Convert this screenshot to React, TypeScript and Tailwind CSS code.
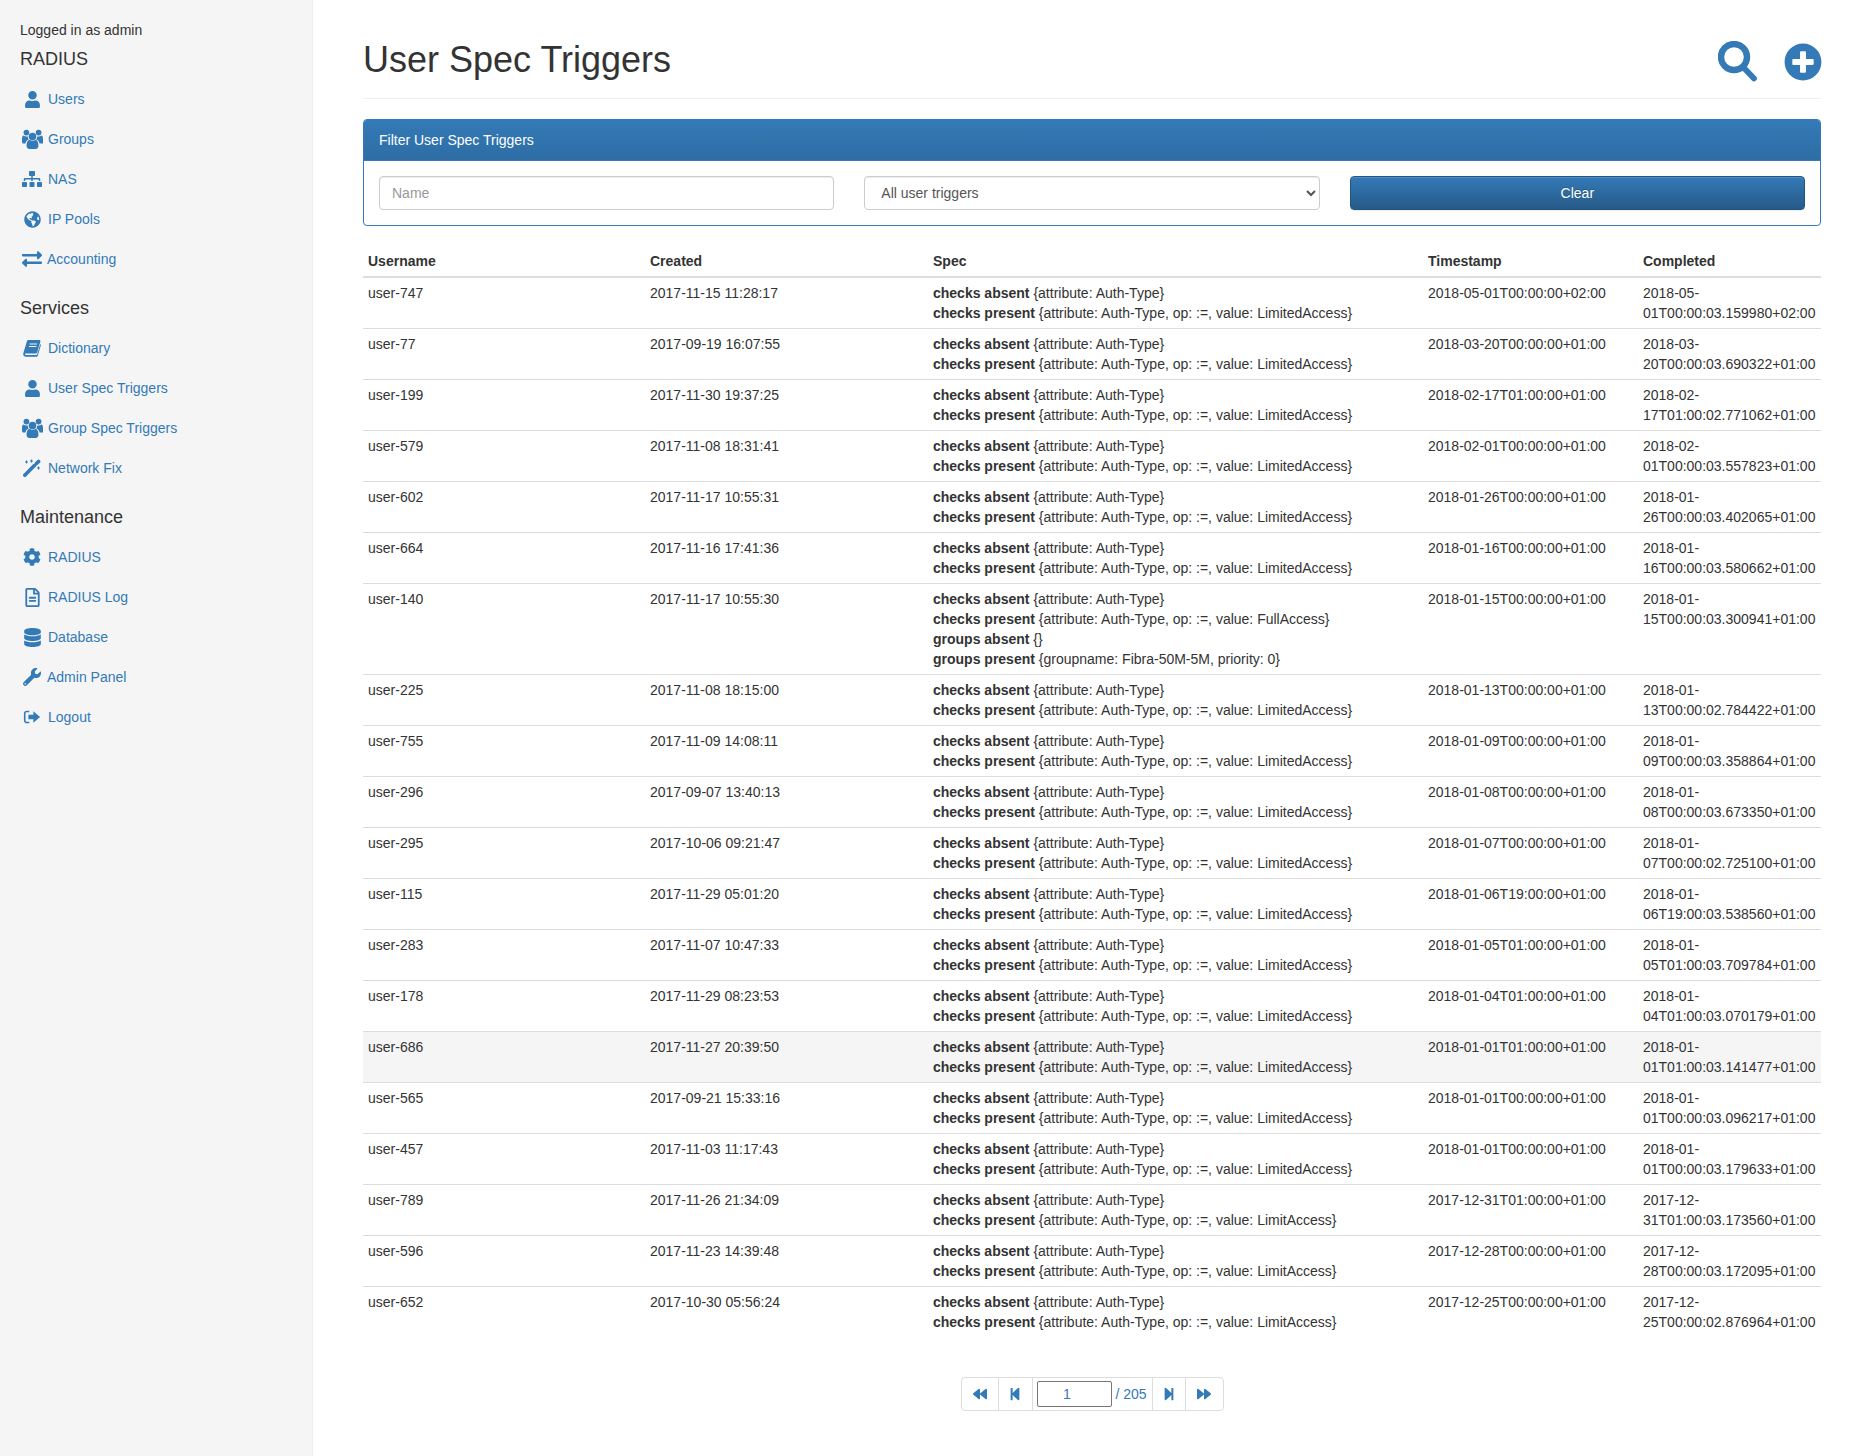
import React from "react";
import { FaUser, FaSitemap, FaGlobeAmericas, FaExchangeAlt, FaCog, FaRegFileAlt, FaDatabase, FaWrench, FaPlusCircle, FaBackward, FaStepBackward, FaStepForward, FaForward } from "react-icons/fa";

const SignOut = ({ size = 18 }: { size?: number }) => (
  <svg width={size} height={size} viewBox="0 0 20 20" fill="currentColor">
    <path d="M7 3H4.2C2.4 3 1 4.4 1 6.2v7.6C1 15.6 2.4 17 4.2 17H7v-1.8H4.2c-.8 0-1.4-.6-1.4-1.4V6.2c0-.8.6-1.4 1.4-1.4H7z" />
    <path d="M11.5 3.6 19 10l-7.5 6.4V12.6H6V7.4h5.5z" />
  </svg>
);

const UsersIcon = () => (
  <svg width={21} height={20} viewBox="0 0 20 19" fill="currentColor">
    <circle cx="10" cy="7.2" r="3.6" />
    <circle cx="4.2" cy="3.4" r="2.7" />
    <circle cx="15.8" cy="3.4" r="2.7" />
    <path d="M4.3 16c0-3.5 1.3-5.6 2.9-5.9.7.7 1.7 1.1 2.8 1.1s2.1-.4 2.8-1.1c1.6.3 2.9 2.4 2.9 5.9 0 1.8-1.1 3-2.7 3H7c-1.6 0-2.7-1.2-2.7-3z" />
    <path d="M0 9.6c0-2 .5-3.3 1.5-3.4.7.6 1.6 1 2.7 1 .5 0 .9-.1 1.3-.2-.1 1 .3 2 1 2.8-1.6.6-2.8 2.1-3.2 4H1.5C.6 13.8 0 13.2 0 12.1z" />
    <path d="M20 9.6c0-2-.5-3.3-1.5-3.4-.7.6-1.6 1-2.7 1-.5 0-.9-.1-1.3-.2.1 1-.3 2-1 2.8 1.6.6 2.8 2.1 3.2 4h2.8c.9 0 1.5-.6 1.5-1.7z" />
  </svg>
);

const BookIcon = () => (
  <svg width={18} height={18} viewBox="0 0 18 18" fill="currentColor">
    <path d="M4.8 1h11.6c.8 0 1.2.7 1 1.4l-3.2 11.1c-.2.7-.7 1-1.4 1H2.6c-.6 0-.7.3-.7.6 0 .4.4.9 1 .9h10.7c.3 0 .5-.2.6-.5l3-10.2.8.5-3.2 10.9c-.2.6-.7 1-1.3 1H3c-1.6 0-2.9-1.2-2.8-2.8 0-.3.1-.6.2-.9L4 2z" />
    <path d="M6.7 5h7.4M6 7.5h7.4" stroke="#f5f5f5" strokeWidth="1" />
  </svg>
);

const MagicIcon = () => (
  <svg width={18} height={18} viewBox="0 0 18 18" fill="currentColor">
    <path d="M1.8 16.2 11.4 6.6" stroke="currentColor" strokeWidth="3.6" strokeLinecap="round" />
    <path d="M13.4 4.6 15.6 2.4" stroke="currentColor" strokeWidth="3.6" strokeLinecap="round" />
    <path d="M3 1.6h1v1h1v1H4v1H3v-1H2v-1h1zM8 .6h1v1h1v1H9v1H8v-1H7v-1h1zM15 7.6h1v1h1v1h-1v1h-1v-1h-1v-1h1z" />
  </svg>
);

const SearchIcon = () => (
  <svg width={39} height={41} viewBox="0 0 39 41" fill="none" stroke="currentColor">
    <circle cx="16" cy="16" r="13" strokeWidth="6.4" />
    <path d="M26 27 36 37.5" strokeWidth="5.8" strokeLinecap="round" />
  </svg>
);

type Item = { label: string; icon: React.ReactNode; tight?: boolean };

const radius: Item[] = [
  { label: "Users", icon: <FaUser size={17} /> },
  { label: "Groups", icon: <UsersIcon /> },
  { label: "NAS", icon: <FaSitemap size={20} /> },
  { label: "IP Pools", icon: <FaGlobeAmericas size={17} /> },
  { label: "Accounting", icon: <FaExchangeAlt size={20} />, tight: true },
];
const services: Item[] = [
  { label: "Dictionary", icon: <BookIcon /> },
  { label: "User Spec Triggers", icon: <FaUser size={17} /> },
  { label: "Group Spec Triggers", icon: <UsersIcon /> },
  { label: "Network Fix", icon: <MagicIcon /> },
];
const maintenance: Item[] = [
  { label: "RADIUS", icon: <FaCog size={18} /> },
  { label: "RADIUS Log", icon: <FaRegFileAlt size={19} /> },
  { label: "Database", icon: <FaDatabase size={19} /> },
  { label: "Admin Panel", icon: <FaWrench size={18} />, tight: true },
  { label: "Logout", icon: <SignOut /> },
];

const NavList = ({ items }: { items: Item[] }) => (
  <ul>
    {items.map((it) => (
      <li key={it.label}>
        <a href="#" className="flex h-10 items-center pl-[20px] text-[#337ab7]">
          <span className={`flex h-5 w-[24px] shrink-0 items-center justify-center ${it.tight ? "mr-[3px]" : "mr-[4px]"}`}>{it.icon}</span>
          {it.label}
        </a>
      </li>
    ))}
  </ul>
);

const A = "LimitedAccess";
const rows: [string, string, string, string, string][] = [
  ["user-747", "2017-11-15 11:28:17", A, "2018-05-01T00:00:00+02:00", "2018-05-01T00:00:03.159980+02:00"],
  ["user-77", "2017-09-19 16:07:55", A, "2018-03-20T00:00:00+01:00", "2018-03-20T00:00:03.690322+01:00"],
  ["user-199", "2017-11-30 19:37:25", A, "2018-02-17T01:00:00+01:00", "2018-02-17T01:00:02.771062+01:00"],
  ["user-579", "2017-11-08 18:31:41", A, "2018-02-01T00:00:00+01:00", "2018-02-01T00:00:03.557823+01:00"],
  ["user-602", "2017-11-17 10:55:31", A, "2018-01-26T00:00:00+01:00", "2018-01-26T00:00:03.402065+01:00"],
  ["user-664", "2017-11-16 17:41:36", A, "2018-01-16T00:00:00+01:00", "2018-01-16T00:00:03.580662+01:00"],
  ["user-140", "2017-11-17 10:55:30", "FullAccess", "2018-01-15T00:00:00+01:00", "2018-01-15T00:00:03.300941+01:00"],
  ["user-225", "2017-11-08 18:15:00", A, "2018-01-13T00:00:00+01:00", "2018-01-13T00:00:02.784422+01:00"],
  ["user-755", "2017-11-09 14:08:11", A, "2018-01-09T00:00:00+01:00", "2018-01-09T00:00:03.358864+01:00"],
  ["user-296", "2017-09-07 13:40:13", A, "2018-01-08T00:00:00+01:00", "2018-01-08T00:00:03.673350+01:00"],
  ["user-295", "2017-10-06 09:21:47", A, "2018-01-07T00:00:00+01:00", "2018-01-07T00:00:02.725100+01:00"],
  ["user-115", "2017-11-29 05:01:20", A, "2018-01-06T19:00:00+01:00", "2018-01-06T19:00:03.538560+01:00"],
  ["user-283", "2017-11-07 10:47:33", A, "2018-01-05T01:00:00+01:00", "2018-01-05T01:00:03.709784+01:00"],
  ["user-178", "2017-11-29 08:23:53", A, "2018-01-04T01:00:00+01:00", "2018-01-04T01:00:03.070179+01:00"],
  ["user-686", "2017-11-27 20:39:50", A, "2018-01-01T01:00:00+01:00", "2018-01-01T01:00:03.141477+01:00"],
  ["user-565", "2017-09-21 15:33:16", A, "2018-01-01T00:00:00+01:00", "2018-01-01T00:00:03.096217+01:00"],
  ["user-457", "2017-11-03 11:17:43", A, "2018-01-01T00:00:00+01:00", "2018-01-01T00:00:03.179633+01:00"],
  ["user-789", "2017-11-26 21:34:09", "LimitAccess", "2017-12-31T01:00:00+01:00", "2017-12-31T01:00:03.173560+01:00"],
  ["user-596", "2017-11-23 14:39:48", "LimitAccess", "2017-12-28T00:00:00+01:00", "2017-12-28T00:00:03.172095+01:00"],
  ["user-652", "2017-10-30 05:56:24", "LimitAccess", "2017-12-25T00:00:00+01:00", "2017-12-25T00:00:02.876964+01:00"],
];

const Line = ({ k, v }: { k: string; v: string }) => (
  <div>
    <strong className="font-bold">{k}</strong> {v}
  </div>
);

export default function App() {
  return (
    <div className="flex min-h-[1456px] bg-white font-['Liberation_Sans',Arial,sans-serif] text-[14px] leading-5 text-[#333]">
      <aside className="w-[313px] shrink-0 border-r border-[#eee] bg-[#f5f5f5] pt-5">
        <div className="pl-5">Logged in as admin</div>
        <h4 className="mt-[9px] mb-[10px] pl-5 text-[18px] leading-5">RADIUS</h4>
        <NavList items={radius} />
        <h4 className="mt-[19px] mb-[10px] pl-5 text-[18px] leading-5">Services</h4>
        <NavList items={services} />
        <h4 className="mt-[19px] mb-[10px] pl-5 text-[18px] leading-5">Maintenance</h4>
        <NavList items={maintenance} />
      </aside>
      <main className="min-w-0 flex-1 pl-[50px] pr-[55px]">
        <header className="mb-5 flex h-[99px] items-start justify-between border-b border-[#eee] pt-[40px]">
          <h1 className="text-[36px] leading-[40px]">User Spec Triggers</h1>
          <div className="mt-[1px] flex items-center gap-[27px] text-[#337ab7]">
            <SearchIcon />
            <FaPlusCircle size={38} className="-mr-[1px]" />
          </div>
        </header>
        <section className="rounded border border-[#337ab7] bg-white">
          <div className="rounded-t-[3px] border-b border-[#337ab7] bg-gradient-to-b from-[#337ab7] to-[#2e6da4] px-[15px] py-[10px] text-white">
            Filter User Spec Triggers
          </div>
          <div className="grid grid-cols-3 gap-[30px] p-[15px]">
            <input
              placeholder="Name"
              className="h-[34px] w-full rounded border border-[#ccc] bg-white px-3 py-1.5 text-[#555] shadow-[inset_0_1px_1px_rgba(0,0,0,0.075)] placeholder:text-[#999]"
            />
            <select className="h-[34px] w-full rounded border border-[#ccc] bg-white px-3 py-1.5 text-[#555] shadow-[inset_0_1px_1px_rgba(0,0,0,0.075)]">
              <option>All user triggers</option>
            </select>
            <button className="h-[34px] w-full rounded border border-[#245580] bg-gradient-to-b from-[#337ab7] to-[#265a88] text-white shadow-[inset_0_1px_0_rgba(255,255,255,0.15),0_1px_1px_rgba(0,0,0,0.075)] [text-shadow:0_-1px_0_rgba(0,0,0,0.2)]">
              Clear
            </button>
          </div>
        </section>
        <table className="mt-5 w-full table-fixed border-collapse">
          <colgroup>
            <col className="w-[282px]" />
            <col className="w-[283px]" />
            <col className="w-[495px]" />
            <col className="w-[215px]" />
            <col />
          </colgroup>
          <thead>
            <tr className="border-b-2 border-[#ddd] text-left">
              <th className="p-[5px] font-bold">Username</th>
              <th className="p-[5px] font-bold">Created</th>
              <th className="p-[5px] font-bold">Spec</th>
              <th className="p-[5px] font-bold">Timestamp</th>
              <th className="p-[5px] font-bold">Completed</th>
            </tr>
          </thead>
          <tbody>
            {rows.map((r, i) => (
              <tr key={r[0]} className={`align-top ${i ? "border-t border-[#ddd]" : ""} ${r[0] === "user-686" ? "bg-[#f5f5f5]" : ""}`}>
                <td className="p-[5px]">{r[0]}</td>
                <td className="p-[5px]">{r[1]}</td>
                <td className="p-[5px]">
                  <Line k="checks absent" v="{attribute: Auth-Type}" />
                  <Line k="checks present" v={`{attribute: Auth-Type, op: :=, value: ${r[2]}}`} />
                  {r[0] === "user-140" && (
                    <>
                      <Line k="groups absent" v="{}" />
                      <Line k="groups present" v="{groupname: Fibra-50M-5M, priority: 0}" />
                    </>
                  )}
                </td>
                <td className="p-[5px]">{r[3]}</td>
                <td className="p-[5px]">{r[4]}</td>
              </tr>
            ))}
          </tbody>
        </table>
        <nav className="mt-10 flex justify-center text-[#337ab7]">
          <div className="flex h-[34px] items-stretch rounded border border-[#ddd] bg-white">
            <a className="flex w-[37px] items-center justify-center border-r border-[#ddd]"><FaBackward size={14} /></a>
            <a className="flex w-[34px] items-center justify-center border-r border-[#ddd]"><FaStepBackward size={14} /></a>
            <div className="flex w-[120px] items-center border-r border-[#ddd] pl-[4px]">
              <input defaultValue="1" className="h-[26px] w-[75px] rounded-[2px] border border-[#767676] bg-white pr-[14px] text-center text-[#337ab7]" />
              <span className="ml-[4px]">/ 205</span>
            </div>
            <a className="flex w-[33px] items-center justify-center border-r border-[#ddd]"><FaStepForward size={14} /></a>
            <a className="flex w-[37px] items-center justify-center"><FaForward size={14} /></a>
          </div>
        </nav>
      </main>
    </div>
  );
}
